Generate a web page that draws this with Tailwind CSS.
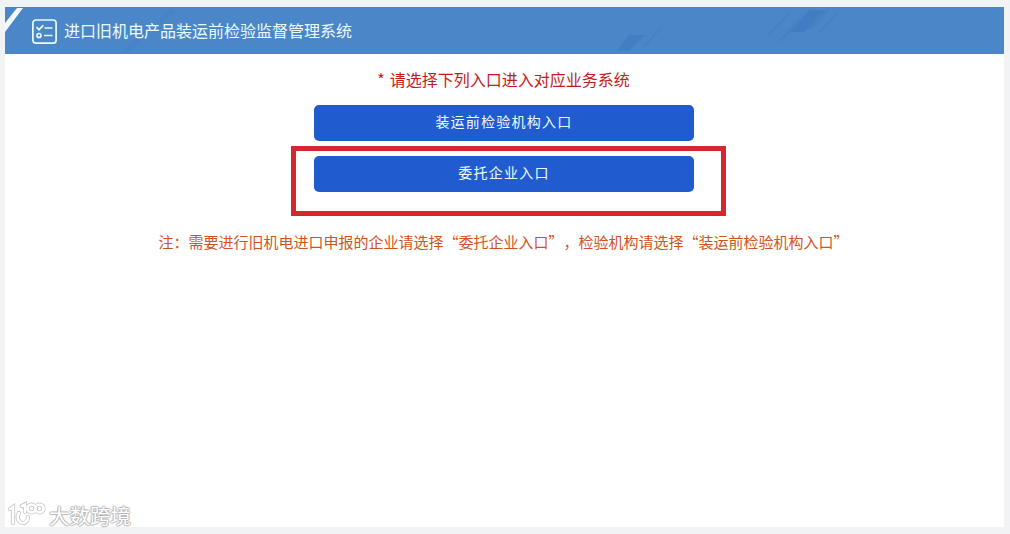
<!DOCTYPE html>
<html lang="zh-CN">
<head>
    <meta charset="UTF-8">
    <meta name="viewport" content="width=device-width, initial-scale=1.0">
    <title>进口旧机电产品装运前检验监督管理系统</title>
    <script src="https://cdn.jsdelivr.net/npm/@tailwindcss/browser@4"></script>
</head>
<body class="h-screen overflow-hidden bg-[#f2f3f4] pt-[7px] pr-[6px] pb-[7px] pl-[5px] font-['Noto_Sans_CJK_SC',sans-serif]">
    <div class="relative flex h-full flex-col bg-white">
        <header class="relative flex h-[47px] shrink-0 items-center overflow-hidden border-t border-[#5685b5] bg-[#4a86c8] pl-[26px]">
            <!-- Header decoration -->
            <svg class="absolute top-0 left-0 h-[46px] w-[999px]" viewBox="0 0 999 46" fill="none">
                <path d="M12 0H18L0 24V15Z" fill="#f4f9fb"/>
                <path d="M624 27H640L624 43H612Z" fill="#437dc2"/>
                <path d="M639 39L656 20" stroke="#437cbb" stroke-width="1"/>
                <path d="M764 27L784 5M814 25L833 4" stroke="#427bbd" stroke-width="1"/>
                <path d="M804 2H820L799 24H785Z" fill="#437cc4"/>
                <path d="M803 22L823 2M775 33L796 11" stroke="#4781c4" stroke-width="3"/>
                <path d="M155 14L168 2M119 46L142 24" stroke="#4883c6" stroke-width="5"/>
            </svg>
            <svg class="relative mt-px h-[26px] w-[26px]" viewBox="0 0 26 26" fill="none" stroke="#e8fbff" stroke-width="1.7">
                <rect x="1.9" y="1" width="23.2" height="23.2" rx="3"/>
                <path d="M5.5 8.2L8 10.7L12.3 6.4M13.5 9H21.5M13 16.5H21.5"/>
                <circle cx="8" cy="16.5" r="2"/>
            </svg>
            <h1 class="relative mb-[2px] ml-[7px] text-base leading-6 text-[#edfcff]">进口旧机电产品装运前检验监督管理系统</h1>
        </header>

        <main class="flex flex-col items-center">
            <p class="mt-[13px] mr-[2px] text-base leading-6 text-[#c41a1a]"><span class="mr-[5px]">*</span>请选择下列入口进入对应业务系统</p>
            <button class="mt-[14px] ml-[-1px] h-9 w-[380px] rounded-[5px] bg-[#205cd0] pb-1 text-sm tracking-[1.25px] text-[#f0fcff]">装运前检验机构入口</button>
            <div class="mt-[5px] ml-[8px] flex h-[70px] w-[435px] justify-center border-5 border-[#d7262f] pt-[5px] pr-[9px]">
                <button class="h-9 w-[380px] rounded-[5px] bg-[#205cd0] pb-1 text-sm tracking-[1.25px] text-[#f0fcff]">委托企业入口</button>
            </div>
            <p class="mt-[14px] mr-[2px] text-[15px] leading-6 text-[#d2521e] [text-spacing-trim:space-all]">注：需要进行旧机电进口申报的企业请选择“委托企业入口”，检验机构请选择“装运前检验机构入口”</p>
        </main>

        <!-- Watermark -->
        <div class="absolute bottom-[-2px] left-[3px] flex items-center">
            <svg class="h-[28px] w-[38px] overflow-visible" viewBox="0 0 38 28" fill="none" stroke-linecap="round">
                <g stroke="#c4c4c4" stroke-width="4.2">
                    <path d="M2 8L5 6V22M11 12C8 17 11 22 15 22C18 22 20 19 20 16M14 5L17 3.5V11"/>
                    <circle cx="23.5" cy="7.5" r="4"/><circle cx="31.5" cy="7.5" r="4"/>
                </g>
                <g stroke="#fff" stroke-width="2.6">
                    <path d="M2 8L5 6V22M11 12C8 17 11 22 15 22C18 22 20 19 20 16M14 5L17 3.5V11"/>
                    <circle cx="23.5" cy="7.5" r="4"/><circle cx="31.5" cy="7.5" r="4"/>
                </g>
            </svg>
            <span class="ml-[3px] text-[20.5px] leading-7 text-white [text-shadow:1px_0_1px_#b4b4b4,-1px_0_1px_#b4b4b4,0_1px_1px_#b4b4b4,0_-1px_1px_#b4b4b4]">大数跨境</span>
        </div>
    </div>
</body>
</html>
